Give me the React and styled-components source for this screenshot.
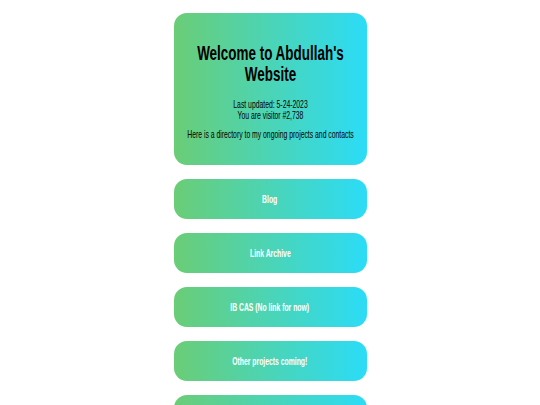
import React from "react";
import styled, { createGlobalStyle } from "styled-components";

const links = [
  { id: "blog", label: "Blog" },
  { id: "archive", label: "Link Archive" },
  { id: "cas", label: "IB CAS (No link for now)" },
  { id: "other", label: "Other projects coming!" },
  { id: "contact", label: "Contact" },
];

// the text on the page is a condensed sans
const SQUEEZE = 0.65;

const GlobalStyle = createGlobalStyle`
  body {
    margin: 0;
    background: #ffffff;
    font-family: "Liberation Sans", Arial, sans-serif;
  }
`;

const Page = styled.div`
  display: flex;
  flex-direction: column;
  align-items: center;
  gap: 14px;
  padding-top: 13px;
`;

const Panel = styled.div`
  width: 193px;
  box-sizing: border-box;
  border-radius: 13px;
  background: linear-gradient(90deg, #6acd76 0%, #2bdcf7 100%);
  text-align: center;
  color: #000;
`;

const Intro = styled(Panel)`
  padding: 29px 0 25px;
`;

const Condensed = styled.div`
  width: ${193 / SQUEEZE}px;
  box-sizing: border-box;
  padding: 0 10px;
  transform: scaleX(${SQUEEZE});
  transform-origin: left top;
`;

const Title = styled.h1`
  margin: 0 0 15px;
  font-size: 20.7px;
  line-height: 21px;
  font-weight: 700;
`;

const Info = styled.p`
  margin: 0 0 9px;
  font-size: 10.5px;
  line-height: 10.5px;

  &:last-child {
    margin-bottom: 0;
  }
`;

const LinkButton = styled(Panel)`
  height: 40px;
  display: flex;
  align-items: center;
  justify-content: center;
  color: #fff;
  font-size: 10.5px;
  font-weight: 700;
  cursor: pointer;
`;

const Label = styled.span`
  display: inline-block;
  white-space: nowrap;
  transform: scaleX(${SQUEEZE});
`;

export default function App() {
  return (
    <>
      <GlobalStyle />
      <Page>
        <Intro>
          <Condensed>
            <Title>Welcome to Abdullah's Website</Title>
            <Info>
              Last updated: 5-24-2023
              <br />
              You are visitor #2,738
            </Info>
            <Info>Here is a directory to my ongoing projects and contacts</Info>
          </Condensed>
        </Intro>
        {links.map((l) => (
          <LinkButton key={l.id}>
            <Label>{l.label}</Label>
          </LinkButton>
        ))}
      </Page>
    </>
  );
}
